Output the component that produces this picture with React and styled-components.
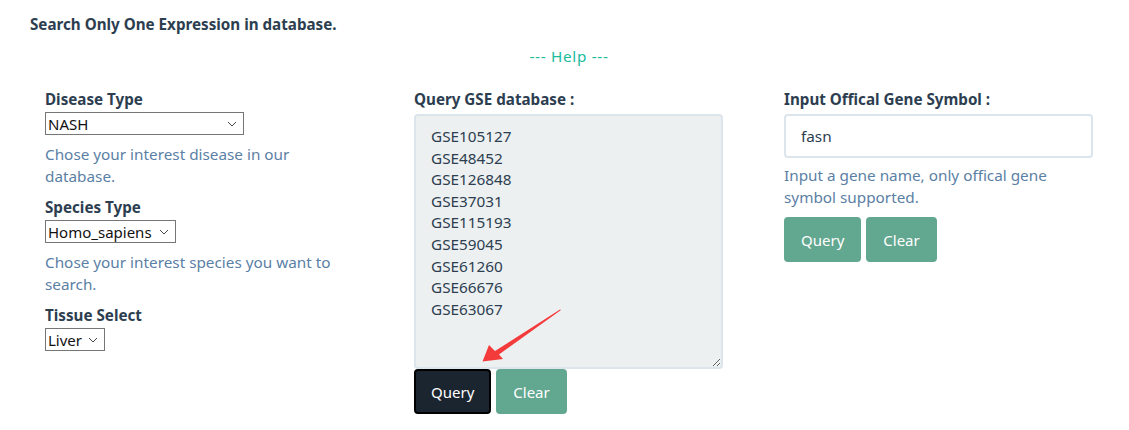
import React from "react";
import styled, { createGlobalStyle } from "styled-components";

const Global = createGlobalStyle`
  html, body { margin: 0; padding: 0; background: #fff; overflow: hidden; }
  body { font-family: "Noto Sans", "Open Sans", sans-serif; color: #2c3e50; }
`;

const Page = styled.div`
  padding: 13px 0 0 30px;
  width: 1099px;
`;

const Title = styled.h4`
  margin: 0;
  font-size: 15.2px;
  font-weight: 700;
  line-height: 22px;
  color: #2c3e50;
`;

const Help = styled.div`
  width: 1078px;
  text-align: center;
  margin-top: 10px;
  font-size: 15.3px;
  letter-spacing: 0.7px;
  line-height: 22px;
  color: #1abc9c;
`;

const Row = styled.div`
  display: grid;
  grid-template-columns: 369px 370px 1fr;
  margin-top: 21px;
`;

const Col = styled.div`
  position: relative;
  padding: 0 15px;
  display: flex;
  flex-direction: column;
  align-items: flex-start;
`;

const Label = styled.label`
  font-size: 15.2px;
  font-weight: 700;
  line-height: 22px;
  color: #2c3e50;
  margin-top: ${(p) => p.$mt || 0}px;
  margin-bottom: ${(p) => p.$mb || 2}px;
`;

const Select = styled.select`
  font-family: "Noto Sans", sans-serif;
  font-size: 15px;
  height: 23px;
  width: ${(p) => p.$w}px;
  border: 1px solid #767676;
  border-radius: 0;
  background: #fff;
  color: #111;
  padding: 0 2px;
  appearance: none;
  background-image: url("data:image/svg+xml,%3Csvg xmlns='http://www.w3.org/2000/svg' width='10' height='6'%3E%3Cpath d='M1 1l4 4 4-4' fill='none' stroke='%23444' stroke-width='1'/%3E%3C/svg%3E");
  background-repeat: no-repeat;
  background-position: right 6px center;
`;

const HelpText = styled.p`
  margin: ${(p) => (p.$mt != null ? p.$mt : 8)}px 0 0;
  font-size: 15.3px;
  line-height: 22px;
  color: #5b80a5;
  max-width: 300px;
`;

const TextArea = styled.textarea`
  box-sizing: border-box;
  width: 309px;
  height: 255px;
  margin: 0;
  padding: 10px 15px;
  background: #ecf0f1;
  border: 2px solid #dce4ec;
  border-radius: 4px;
  font-family: "Noto Sans", sans-serif;
  font-size: 15.3px;
  line-height: 21.6px;
  color: #2c3e50;
  resize: vertical;
  outline: none;
`;

const Input = styled.input`
  box-sizing: border-box;
  width: 309px;
  height: 44px;
  padding: 0 15px;
  border: 2px solid #dce4ec;
  border-radius: 4px;
  font-family: "Noto Sans", sans-serif;
  font-size: 15.3px;
  color: #2c3e50;
  outline: none;
`;

const Buttons = styled.div`
  display: flex;
  gap: 5px;
  margin-top: ${(p) => p.$mt || 0}px;
`;

const Button = styled.button`
  box-sizing: border-box;
  height: 45px;
  padding: 0 15px;
  border-radius: 4px;
  border: 2px solid ${(p) => (p.$dark ? "#000" : "#62a78f")};
  background: ${(p) => (p.$dark ? "#1b2530" : "#62a78f")};
  color: #fff;
  font-family: "Noto Sans", sans-serif;
  font-size: 15px;
  cursor: pointer;
`;

const Arrow = styled.svg`
  position: absolute;
  left: 0;
  top: 0;
  overflow: visible;
  pointer-events: none;
`;

export default function App() {
  return (
    <>
      <Global />
      <Page>
        <Title>Search Only One Expression in database.</Title>
        <Help>--- Help ---</Help>
        <Row>
          <Col>
            <Label>Disease Type</Label>
            <Select $w={199} defaultValue="NASH">
              <option>NASH</option>
            </Select>
            <HelpText>Chose your interest disease in our database.</HelpText>
            <Label $mt={9}>Species Type</Label>
            <Select $w={131} defaultValue="Homo_sapiens">
              <option>Homo_sapiens</option>
            </Select>
            <HelpText>Chose your interest species you want to search.</HelpText>
            <Label $mt={9}>Tissue Select</Label>
            <Select $w={60} defaultValue="Liver">
              <option>Liver</option>
            </Select>
          </Col>
          <Col>
            <Label $mb={4}>Query GSE database :</Label>
            <TextArea
              readOnly
              defaultValue={[
                "GSE105127",
                "GSE48452",
                "GSE126848",
                "GSE37031",
                "GSE115193",
                "GSE59045",
                "GSE61260",
                "GSE66676",
                "GSE63067",
              ].join("\n")}
            />
            <Buttons>
              <Button $dark>Query</Button>
              <Button>Clear</Button>
            </Buttons>
            <Arrow width="1" height="1">
              <polygon
                points="162,222 100,266.5 104,271 83.5,273.5 90,257 96,263 161,221.5"
                fill="#f43b3b"
              />
            </Arrow>
          </Col>
          <Col>
            <Label $mb={4}>Input Offical Gene Symbol :</Label>
            <Input defaultValue="fasn" />
            <HelpText $mt={6}>Input a gene name, only offical gene symbol supported.</HelpText>
            <Buttons $mt={9}>
              <Button>Query</Button>
              <Button>Clear</Button>
            </Buttons>
          </Col>
        </Row>
      </Page>
    </>
  );
}
